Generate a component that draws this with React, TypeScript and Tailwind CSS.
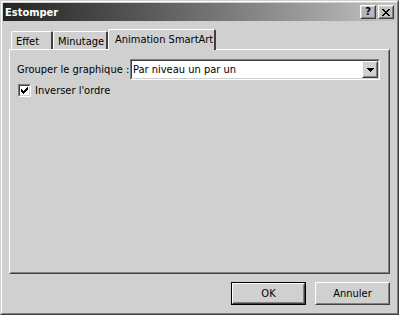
import React from "react";

const FONT = "font-['DejaVu_Sans_Condensed','DejaVu_Sans',sans-serif] font-stretch-condensed";

function Raised({ className = "", children }: { className?: string; children?: React.ReactNode }) {
  return (
    <div className={`border border-t-white border-l-white border-b-[#404040] border-r-[#404040] ${className}`}>
      <div className="h-full w-full border border-t-[#d0d0d0] border-l-[#d0d0d0] border-b-[#808080] border-r-[#808080] flex items-center justify-center">
        {children}
      </div>
    </div>
  );
}

function Tab({ label, selected, className = "" }: { label: string; selected?: boolean; className?: string }) {
  if (selected) {
    return (
      <div className={`relative z-10 h-[21px] -mb-[1px] bg-[#d0d0d0] border-t border-l border-t-white border-l-white border-r-2 border-r-[#404040] rounded-tl-[2px] rounded-tr-[2px] flex items-start pt-[3px] pl-[6px] ${className}`}>
        <span className="leading-[13px]">{label}</span>
      </div>
    );
  }
  return (
    <div className={`h-[18px] bg-[#d0d0d0] border-t border-l border-t-white border-l-white border-r-2 border-r-[#404040] rounded-tl-[2px] rounded-tr-[2px] flex items-start pt-[3px] pl-[4px] ${className}`}>
      <span className="leading-[13px]">{label}</span>
    </div>
  );
}

export default function App() {
  return (
    <div className={`w-[399px] h-[315px] bg-[#d0d0d0] text-black text-[11px] ${FONT}`}>
      <div className="w-full h-full border border-t-[#d0d0d0] border-l-[#d0d0d0] border-b-[#404040] border-r-[#404040]">
        <div className="w-full h-full border border-t-white border-l-white border-b-[#808080] border-r-[#808080] p-[1px] flex flex-col">
          {/* Title bar */}
          <div className="h-[18px] shrink-0 bg-gradient-to-r from-[#242424] to-[#c4c4c4] flex items-center pl-[2px] pr-[2px]">
            <span className="text-white font-bold text-[11px] leading-[13px] flex-1">Estomper</span>
            <Raised className="w-[16px] h-[14px]">
              <span className="font-bold text-[11px] leading-[10px] font-['DejaVu_Sans',sans-serif]">?</span>
            </Raised>
            <Raised className="w-[16px] h-[14px] ml-[2px]">
              <svg width="8" height="7" viewBox="0 0 8 7" shapeRendering="crispEdges">
                <path d="M0 0h2v1H0zM6 0h2v1H6zM1 1h2v1H1zM5 1h2v1H5zM2 2h4v1H2zM3 3h2v1H3zM2 4h4v1H2zM1 5h2v1H1zM5 5h2v1H5zM0 6h2v1H0zM6 6h2v1H6z" fill="#000" />
              </svg>
            </Raised>
          </div>

          {/* Tabs */}
          <div className="mx-[6px] mt-[8px] flex flex-col flex-1">
            <div className="h-[20px] flex items-end pl-[2px] shrink-0">
              <Tab label="Effet" className="w-[42px]" />
              <Tab label="Minutage" className="w-[55px]" />
              <Tab label="Animation SmartArt" selected className="w-[108px]" />
            </div>
            <div className="flex-1 border border-t-white border-l-white border-b-[#404040] border-r-[#404040]">
              <div className="w-full h-full border border-t-[#d0d0d0] border-l-[#d0d0d0] border-b-[#808080] border-r-[#808080] pt-[8px] pl-[6px]">
                <div className="flex items-center h-[21px]">
                  <span className="w-[113px] leading-[13px]">Grouper le graphique :</span>
                  <div className="w-[250px] h-[21px] border border-t-[#808080] border-l-[#808080] border-b-white border-r-white">
                    <div className="w-full h-full border border-t-[#404040] border-l-[#404040] border-b-[#d0d0d0] border-r-[#d0d0d0] bg-white flex items-center">
                      <span className="flex-1 pl-[1px] leading-[13px]">Par niveau un par un</span>
                      <Raised className="w-[16px] h-[17px] bg-[#d0d0d0]">
                        <svg width="7" height="4" viewBox="0 0 7 4" shapeRendering="crispEdges">
                          <path d="M0 0h7v1H0zM1 1h5v1H1zM2 2h3v1H2zM3 3h1v1H3z" fill="#000" />
                        </svg>
                      </Raised>
                    </div>
                  </div>
                </div>
                <div className="flex items-center mt-[4px] ml-[1px]">
                  <div className="w-[13px] h-[13px] border border-t-[#808080] border-l-[#808080] border-b-white border-r-white">
                    <div className="w-full h-full border border-t-[#404040] border-l-[#404040] border-b-[#d0d0d0] border-r-[#d0d0d0] bg-white flex items-center justify-center">
                      <svg width="7" height="7" viewBox="0 0 7 7" shapeRendering="crispEdges">
                        <path d="M6 0h1v3H6zM5 1h1v3H5zM4 2h1v3H4zM3 3h1v3H3zM2 4h1v3H2zM1 3h1v3H1zM0 2h1v3H0z" fill="#000" />
                      </svg>
                    </div>
                  </div>
                  <span className="ml-[4px] leading-[13px]">Inverser l'ordre</span>
                </div>
              </div>
            </div>
          </div>

          {/* Buttons */}
          <div className="h-[23px] mt-[8px] mb-[7px] mr-[6px] flex justify-end gap-[9px] shrink-0">
            <div className="w-[75px] h-[23px] border border-black">
              <Raised className="w-full h-full">
                <span className="leading-[13px]">OK</span>
              </Raised>
            </div>
            <Raised className="w-[75px] h-[23px]">
              <span className="leading-[13px]">Annuler</span>
            </Raised>
          </div>
        </div>
      </div>
    </div>
  );
}
